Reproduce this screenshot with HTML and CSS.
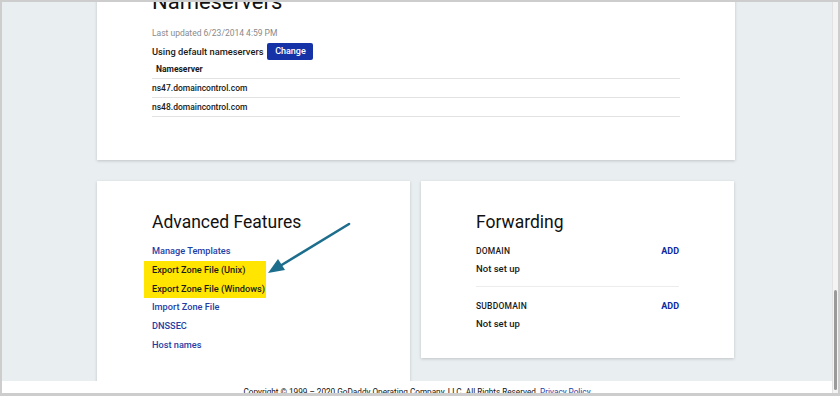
FILE: index.html
```html
<!DOCTYPE html>
<html lang="en">
<head>
    <meta charset="UTF-8">
    <meta name="viewport" content="width=device-width, initial-scale=1.0">
    <title>DNS Management</title>
    <link rel="stylesheet" href="styles.css">
</head>
<body>

    <div class="window">
        <div class="viewport">
            <div class="page">

                <section class="card card-ns">
                    <h2 class="card-title">Nameservers</h2>
                    <div class="updated">Last updated 6/23/2014 4:59 PM</div>
                    <div class="ns-using">
                        <span>Using default nameservers</span>
                        <button class="btn-change">Change</button>
                    </div>
                    <div class="ns-table">
                        <div class="ns-row ns-head">Nameserver</div>
                        <div class="ns-row">ns47.domaincontrol.com</div>
                        <div class="ns-row">ns48.domaincontrol.com</div>
                    </div>
                </section>

                <div class="card-row">
                    <section class="card card-adv">
                        <h2 class="card-title">Advanced Features</h2>
                        <ul class="links">
                            <li><a href="#">Manage Templates</a></li>
                            <li class="marked">
                                <a href="#">Export Zone File (Unix)</a>
                                <a href="#">Export Zone File (Windows)</a>
                            </li>
                            <li><a href="#">Import Zone File</a></li>
                            <li><a href="#">DNSSEC</a></li>
                            <li><a href="#">Host names</a></li>
                        </ul>
                        <svg class="arrow" width="200" height="110" viewBox="0 0 200 110">
                            <line x1="252" y1="43" x2="183" y2="85" stroke="#1d6e8d" stroke-width="2.6" stroke-linecap="round"/>
                            <polygon points="171,92 188,89 181,78" fill="#1d6e8d"/>
                        </svg>
                    </section>

                    <section class="card card-fwd">
                        <h2 class="card-title">Forwarding</h2>
                        <div class="fwd-item">
                            <div class="fwd-top">
                                <span class="fwd-label">DOMAIN</span>
                                <a href="#" class="fwd-add">ADD</a>
                            </div>
                            <div class="fwd-status">Not set up</div>
                        </div>
                        <div class="fwd-item">
                            <div class="fwd-top">
                                <span class="fwd-label">SUBDOMAIN</span>
                                <a href="#" class="fwd-add">ADD</a>
                            </div>
                            <div class="fwd-status">Not set up</div>
                        </div>
                    </section>
                </div>

            </div>
            <footer class="footer">
                Copyright © 1999 – 2020 GoDaddy Operating Company, LLC. All Rights Reserved. <a href="#">Privacy Policy</a>
            </footer>
        </div>
        <div class="scrollbar"><div class="thumb"></div></div>
    </div>

</body>
</html>
```

FILE: styles.css
```css
* {
    box-sizing: border-box;
}

body {
    margin: 0;
    font-family: 'Roboto', 'Liberation Sans', sans-serif;
    color: #1a1a1a;
    background: #fff;
}

a {
    text-decoration: none;
}

.window {
    width: 840px;
    height: 396px;
    display: flex;
    border: 2px solid #cdcdcd;
    border-bottom-width: 3px;
    overflow: hidden;
}

.viewport {
    flex: 1;
    display: flex;
    flex-direction: column;
    overflow: hidden;
}

.page {
    flex: 1;
    background-color: #e9eef0;
    padding-left: 95px;
    padding-right: 97px;
    overflow: hidden;
}

.card {
    background-color: #fff;
    box-shadow: 0 1px 3px rgba(0, 0, 0, 0.18);
    padding: 0 55px;
}

.card-title {
    margin: 0;
    font-weight: 400;
    color: #111;
}

/* nameservers */
.card-ns {
    margin-top: -40px;
    height: 198px;
    padding-top: 26px;
}

.card-ns .card-title {
    font-size: 22px;
    line-height: 28px;
}

.updated {
    margin-top: 11px;
    font-size: 8.5px;
    line-height: 12px;
    color: #8a8a8a;
}

.ns-using {
    display: flex;
    align-items: center;
    gap: 4px;
    margin-top: 3px;
    font-size: 9.3px;
    font-weight: 500;
    height: 18px;
}

.btn-change {
    height: 17px;
    width: 46px;
    padding: 0;
    border: none;
    border-radius: 2px;
    background-color: #1532a6;
    color: #fff;
    font-family: inherit;
    font-size: 9px;
    font-weight: 500;
}

.ns-table {
    margin-top: 0;
}

.ns-row {
    height: 19px;
    line-height: 18px;
    border-bottom: 1px solid #e2e2e2;
    font-size: 8.5px;
    font-weight: 500;
}

.ns-head {
    padding-left: 4px;
    font-weight: 700;
}

/* bottom cards */
.card-row {
    display: flex;
    align-items: flex-start;
    gap: 11px;
    margin-top: 21px;
}

.card-adv,
.card-fwd {
    width: 313px;
    padding-top: 30px;
    position: relative;
}

.card-adv {
    height: 230px;
}

.card-fwd {
    height: 177px;
}

.card-row .card-title {
    font-size: 17.5px;
    line-height: 22px;
}

.links {
    list-style: none;
    margin: 9px 0 0;
    padding: 0;
    font-size: 9.2px;
    font-weight: 500;
}

.links a {
    display: block;
    height: 18.8px;
    line-height: 18.8px;
    color: #1f3ea6;
    white-space: nowrap;
}

.links .marked {
    width: 122px;
    margin-left: -8px;
    padding: 0 0 0 8px;
    background-color: #ffe500;
}

.links .marked a {
    color: #1a1a1a;
}

.arrow {
    position: absolute;
    left: 0;
    top: 0;
    overflow: visible;
}

.card-fwd .card-title {
    margin-bottom: 9px;
}

.fwd-item {
    padding-bottom: 8px;
}

.fwd-item + .fwd-item {
    border-top: 1px solid #ececec;
    padding-top: 10px;
}

.fwd-top {
    display: flex;
    justify-content: space-between;
    align-items: center;
    height: 18px;
}

.fwd-label {
    font-size: 8.5px;
    font-weight: 500;
    letter-spacing: 0.2px;
}

.fwd-add {
    font-size: 9px;
    font-weight: 700;
    color: #0b2aa0;
}

.fwd-status {
    height: 18px;
    line-height: 18px;
    font-size: 9.5px;
    font-weight: 500;
}

/* footer */
.footer {
    height: 12px;
    background-color: #fff;
    font-size: 8.2px;
    line-height: 1;
    padding-top: 7px;
    text-align: center;
    white-space: nowrap;
    overflow: hidden;
    color: #111;
}

.footer a {
    color: #1f3ea6;
}

/* scrollbar */
.scrollbar {
    width: 6px;
    background-color: #f4f4f4;
    border-left: 1px solid #e2e2e2;
}

.thumb {
    margin-top: 288px;
    margin-left: 1px;
    width: 3px;
    height: 100px;
    border-radius: 2px;
    background-color: #9a9a9a;
}
```
